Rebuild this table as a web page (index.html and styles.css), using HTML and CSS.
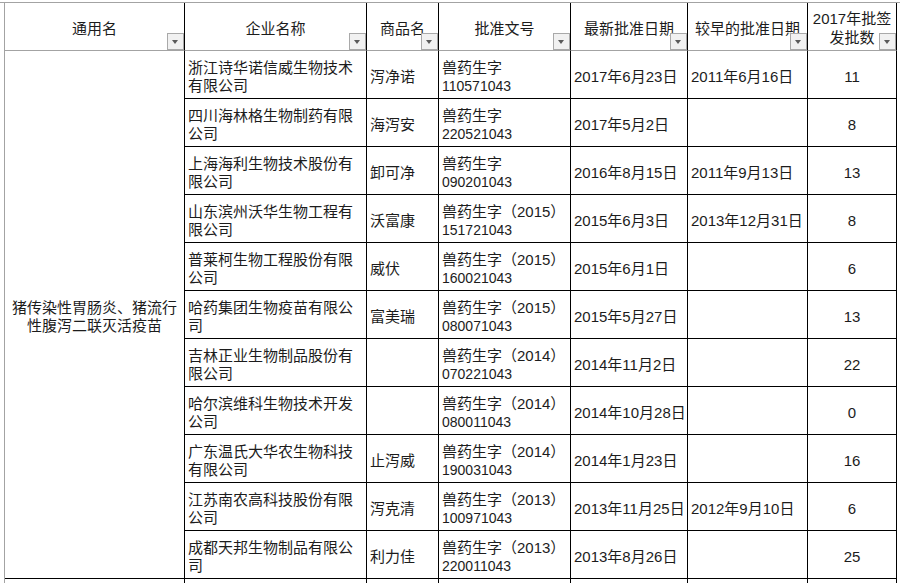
FILE: index.html
```html
<!DOCTYPE html>
<html lang="zh-CN">
<head>
<meta charset="utf-8">
<title>猪传染性胃肠炎、猪流行性腹泻二联灭活疫苗</title>
<link rel="stylesheet" href="styles.css">
</head>
<body>
<div class="sheet">
  <div class="grid" role="table">
    <div class="hd" role="columnheader">通用名<span class="dd"></span></div>
    <div class="hd" role="columnheader">企业名称<span class="dd"></span></div>
    <div class="hd" role="columnheader">商品名<span class="dd"></span></div>
    <div class="hd" role="columnheader">批准文号<span class="dd"></span></div>
    <div class="hd" role="columnheader">最新批准日期<span class="dd"></span></div>
    <div class="hd" role="columnheader">较早的批准日期<span class="dd"></span></div>
    <div class="hd two" role="columnheader"><span>2017年批签<br>发批数</span><span class="dd"></span></div>

    <div class="td merged"><span>猪传染性胃肠炎、猪流行<br>性腹泻二联灭活疫苗</span></div>

    <div class="td"><span>浙江诗华诺信威生物技术<br>有限公司</span></div>
    <div class="td">泻净诺</div>
    <div class="td doc"><span>兽药生字<br><span class="num">110571043</span></span></div>
    <div class="td date">2017年6月23日</div>
    <div class="td date">2011年6月16日</div>
    <div class="td cnt">11</div>

    <div class="td"><span>四川海林格生物制药有限<br>公司</span></div>
    <div class="td">海泻安</div>
    <div class="td doc"><span>兽药生字<br><span class="num">220521043</span></span></div>
    <div class="td date">2017年5月2日</div>
    <div class="td date"></div>
    <div class="td cnt">8</div>

    <div class="td"><span>上海海利生物技术股份有<br>限公司</span></div>
    <div class="td">卸可净</div>
    <div class="td doc"><span>兽药生字<br><span class="num">090201043</span></span></div>
    <div class="td date">2016年8月15日</div>
    <div class="td date">2011年9月13日</div>
    <div class="td cnt">13</div>

    <div class="td"><span>山东滨州沃华生物工程有<br>限公司</span></div>
    <div class="td">沃富康</div>
    <div class="td doc"><span>兽药生字（2015）<br><span class="num">151721043</span></span></div>
    <div class="td date">2015年6月3日</div>
    <div class="td date">2013年12月31日</div>
    <div class="td cnt">8</div>

    <div class="td"><span>普莱柯生物工程股份有限<br>公司</span></div>
    <div class="td">威伏</div>
    <div class="td doc"><span>兽药生字（2015）<br><span class="num">160021043</span></span></div>
    <div class="td date">2015年6月1日</div>
    <div class="td date"></div>
    <div class="td cnt">6</div>

    <div class="td"><span>哈药集团生物疫苗有限公<br>司</span></div>
    <div class="td">富美瑞</div>
    <div class="td doc"><span>兽药生字（2015）<br><span class="num">080071043</span></span></div>
    <div class="td date">2015年5月27日</div>
    <div class="td date"></div>
    <div class="td cnt">13</div>

    <div class="td"><span>吉林正业生物制品股份有<br>限公司</span></div>
    <div class="td"></div>
    <div class="td doc"><span>兽药生字（2014）<br><span class="num">070221043</span></span></div>
    <div class="td date">2014年11月2日</div>
    <div class="td date"></div>
    <div class="td cnt">22</div>

    <div class="td"><span>哈尔滨维科生物技术开发<br>公司</span></div>
    <div class="td"></div>
    <div class="td doc"><span>兽药生字（2014）<br><span class="num">080011043</span></span></div>
    <div class="td date">2014年10月28日</div>
    <div class="td date"></div>
    <div class="td cnt">0</div>

    <div class="td"><span>广东温氏大华农生物科技<br>有限公司</span></div>
    <div class="td">止泻威</div>
    <div class="td doc"><span>兽药生字（2014）<br><span class="num">190031043</span></span></div>
    <div class="td date">2014年1月23日</div>
    <div class="td date"></div>
    <div class="td cnt">16</div>

    <div class="td"><span>江苏南农高科技股份有限<br>公司</span></div>
    <div class="td">泻克清</div>
    <div class="td doc"><span>兽药生字（2013）<br><span class="num">100971043</span></span></div>
    <div class="td date">2013年11月25日</div>
    <div class="td date">2012年9月10日</div>
    <div class="td cnt">6</div>

    <div class="td"><span>成都天邦生物制品有限公<br>司</span></div>
    <div class="td">利力佳</div>
    <div class="td doc"><span>兽药生字（2013）<br><span class="num">220011043</span></span></div>
    <div class="td date">2013年8月26日</div>
    <div class="td date"></div>
    <div class="td cnt">25</div>

    <div class="tail"></div>
    <div class="tail"></div>
    <div class="tail"></div>
    <div class="tail"></div>
    <div class="tail"></div>
    <div class="tail"></div>
    <div class="tail"></div>
  </div>
</div>
</body>
</html>
```

FILE: styles.css
```css
html, body {
  margin: 0;
  padding: 0;
  background: #ffffff;
  overflow: hidden;
}

body {
  width: 900px;
  height: 583px;
  font-family: "Liberation Sans", "Noto Sans CJK SC", sans-serif;
  font-size: 15px;
  color: #1c1c1c;
}

.sheet {
  margin-top: 2px;
  border-top: 1px solid #a3a3a3;
  padding-left: 4px;
}

.grid {
  display: grid;
  grid-template-columns: 180px 182px 72px 132px 117px 120px 89px;
  grid-auto-rows: 48px;
  width: 892px;
  border-left: 1px solid #a3a3a3;
}

.hd {
  position: relative;
  box-sizing: border-box;
  border-right: 1px solid #000;
  border-bottom: 1px solid #a3a3a3;
  display: flex;
  align-items: center;
  justify-content: center;
  text-align: center;
  line-height: 19px;
  padding-top: 4px;
  white-space: nowrap;
}

.hd.two {
  padding-top: 3px;
}

.dd {
  position: absolute;
  right: 0;
  bottom: 0;
  width: 17px;
  height: 17px;
  box-sizing: border-box;
  border: 1px solid #a9a9a9;
  background: #f1f1f1;
}

.dd::after {
  content: "";
  position: absolute;
  left: 4px;
  top: 6px;
  width: 0;
  height: 0;
  border-left: 3.5px solid transparent;
  border-right: 3.5px solid transparent;
  border-top: 4px solid #5a5a5a;
}

.td {
  box-sizing: border-box;
  border-right: 1px solid #000;
  border-bottom: 1px solid #000;
  display: flex;
  align-items: center;
  padding-left: 3px;
  padding-top: 4px;
  line-height: 18px;
  white-space: nowrap;
  overflow: hidden;
}

.merged {
  grid-column: 1;
  grid-row: 2 / span 11;
  justify-content: center;
  text-align: center;
  padding-left: 0;
}

.doc .num {
  font-size: 14px;
}

.cnt {
  justify-content: center;
  padding-left: 0;
}

.tail {
  border-right: 1px solid #000;
}
```
